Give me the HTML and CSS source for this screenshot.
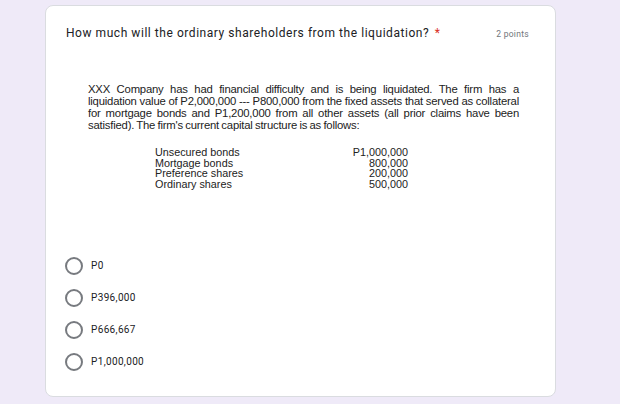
FILE: index.html
```html
<!DOCTYPE html>
<html>
<head>
<meta charset="utf-8">
<link rel="stylesheet" href="styles.css">
</head>
<body>
<div class="card">
  <div class="head">
    <div class="title">How much will the ordinary shareholders from the liquidation? <span class="star">*</span></div>
    <div class="points">2 points</div>
  </div>
  <div class="image">
    <p class="para">
      <span class="line">XXX Company has had financial difficulty and is being liquidated. The firm has a</span>
      <span class="line">liquidation value of P2,000,000 --- P800,000 from the fixed assets that served as collateral</span>
      <span class="line">for mortgage bonds and P1,200,000 from all other assets (all prior claims have been</span>
      <span class="line last">satisfied). The firm's current capital structure is as follows:</span>
    </p>
    <div class="table">
      <div class="row"><span>Unsecured bonds</span><span>P1,000,000</span></div>
      <div class="row"><span>Mortgage bonds</span><span>800,000</span></div>
      <div class="row"><span>Preference shares</span><span>200,000</span></div>
      <div class="row"><span>Ordinary shares</span><span>500,000</span></div>
    </div>
  </div>
  <div class="options">
    <div class="opt"><span class="radio"></span><span class="label">P0</span></div>
    <div class="opt"><span class="radio"></span><span class="label">P396,000</span></div>
    <div class="opt"><span class="radio"></span><span class="label">P666,667</span></div>
    <div class="opt"><span class="radio"></span><span class="label">P1,000,000</span></div>
  </div>
</div>
</body>
</html>
```

FILE: styles.css
```css
html, body { margin: 0; padding: 0; }
body {
  background: #efeaf8;
  width: 620px;
  height: 404px;
  overflow: hidden;
  font-family: "Roboto", "Liberation Sans", sans-serif;
}
.card {
  box-sizing: border-box;
  margin: 5px 0 0 45px;
  width: 511px;
  height: 392px;
  background: #fff;
  border: 1px solid #dadce0;
  border-radius: 8px;
}
.head {
  display: flex;
  justify-content: space-between;
  align-items: baseline;
  padding: 20px 26px 0 20px;
}
.title {
  font-size: 12px;
  color: #202124;
  letter-spacing: 0.55px;
}
.star { color: #d93025; margin-left: 2px; }
.points {
  font-size: 8.5px;
  color: #70757a;
  letter-spacing: 0.3px;
}
.image {
  padding: 43px 36px 0 42px;
  font-family: "Liberation Sans", Arial, sans-serif;
  color: #222;
}
.para {
  margin: 0;
  font-size: 11.3px;
  line-height: 12px;
  letter-spacing: -0.2px;
  word-spacing: -0.6px;
}
.line {
  display: block;
  text-align: justify;
  text-align-last: justify;
}
.line.last {
  text-align-last: left;
}
.table {
  margin: 16px 0 0 67px;
  width: 253px;
  font-size: 10.8px;
  line-height: 10.7px;
}
.row { display: flex; justify-content: space-between; }
.options {
  padding: 67px 0 0 19px;
  display: flex;
  flex-direction: column;
  gap: 14px;
}
.opt { display: flex; align-items: center; height: 18px; }
.radio {
  box-sizing: border-box;
  width: 18px;
  height: 18px;
  border: 2px solid #5f6368;
  border-radius: 50%;
  opacity: 0.85;
}
.label {
  margin-left: 8px;
  font-size: 10px;
  letter-spacing: 0.35px;
  color: #202124;
}
```
